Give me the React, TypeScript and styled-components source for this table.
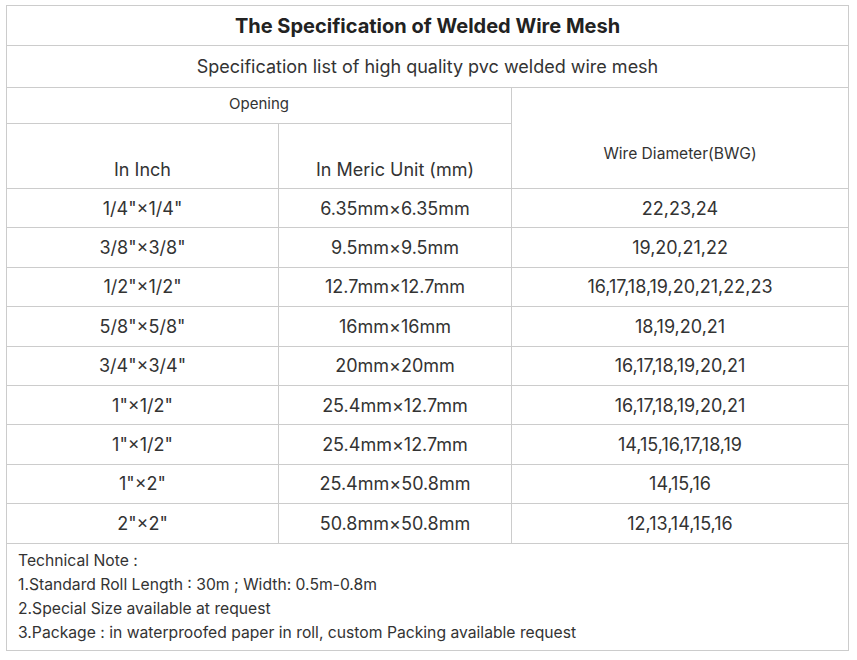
import styled, { createGlobalStyle } from "styled-components";

const GlobalStyle = createGlobalStyle`
  body {
    margin: 0;
    background: #fff;
    font-family: Inter, "Noto Sans", sans-serif;
    color: #333;
  }
`;

const rows = [
  ['1/4"×1/4"', "6.35mm×6.35mm", "22,23,24"],
  ['3/8"×3/8"', "9.5mm×9.5mm", "19,20,21,22"],
  ['1/2"×1/2"', "12.7mm×12.7mm", "16,17,18,19,20,21,22,23"],
  ['5/8"×5/8"', "16mm×16mm", "18,19,20,21"],
  ['3/4"×3/4"', "20mm×20mm", "16,17,18,19,20,21"],
  ['1"×1/2"', "25.4mm×12.7mm", "16,17,18,19,20,21"],
  ['1"×1/2"', "25.4mm×12.7mm", "14,15,16,17,18,19"],
  ['1"×2"', "25.4mm×50.8mm", "14,15,16"],
  ['2"×2"', "50.8mm×50.8mm", "12,13,14,15,16"],
];

const App = () => {
  return (
    <>
      <GlobalStyle />
      <Wrap>
        <Table>
          <colgroup>
            <col style={{ width: 272 }} />
            <col style={{ width: 233 }} />
            <col style={{ width: 337 }} />
          </colgroup>
          <tbody>
            <tr>
              <Title colSpan={3}>The Specification of Welded Wire Mesh</Title>
            </tr>
            <tr>
              <Subtitle colSpan={3}>
                Specification list of high quality pvc welded wire mesh
              </Subtitle>
            </tr>
            <tr>
              <Opening colSpan={2}>Opening</Opening>
              <WireHead rowSpan={2}>Wire Diameter(BWG)</WireHead>
            </tr>
            <tr>
              <ColHead>In Inch</ColHead>
              <ColHead>In Meric Unit (mm)</ColHead>
            </tr>
            {rows.map((r, i) => (
              <DataRow key={i}>
                <Cell>{r[0]}</Cell>
                <Cell>{r[1]}</Cell>
                <Cell>{r[2]}</Cell>
              </DataRow>
            ))}
            <tr>
              <Notes colSpan={3}>
                <div>Technical Note :</div>
                <div>1.Standard Roll Length : 30m ; Width: 0.5m-0.8m</div>
                <div>2.Special Size available at request</div>
                <div>
                  3.Package : in waterproofed paper in roll, custom Packing
                  available request
                </div>
              </Notes>
            </tr>
          </tbody>
        </Table>
      </Wrap>
    </>
  );
};

const Wrap = styled.div`
  padding: 5px 0 0 6px;
`;

const Table = styled.table`
  width: 843px;
  border-collapse: collapse;
  table-layout: fixed;

  td {
    border: 1px solid #cccccc;
    text-align: center;
    vertical-align: middle;
    padding: 0;
  }
`;

const Title = styled.td`
  height: 39px;
  font-size: 20px;
  font-weight: 700;
  color: #222;
`;

const Subtitle = styled.td`
  height: 41px;
  font-size: 18px;
`;

const Opening = styled.td`
  height: 31px;
  font-size: 15px;
  && {
    padding-bottom: 4px;
  }
`;

const WireHead = styled.td`
  font-size: 15.6px;
  && {
    padding-top: 30px;
  }
`;

const ColHead = styled.td`
  height: 56px;
  font-size: 18px;
  && {
    vertical-align: bottom;
    padding-bottom: 8px;
  }
`;

const DataRow = styled.tr`
  height: 39.4px;
`;

const Cell = styled.td`
  font-size: 18px;
`;

const Notes = styled.td`
  height: 96px;
  font-size: 15.7px;
  line-height: 24px;
  && {
    text-align: left;
    vertical-align: top;
    padding: 5px 11px;
  }
`;

export default App;
